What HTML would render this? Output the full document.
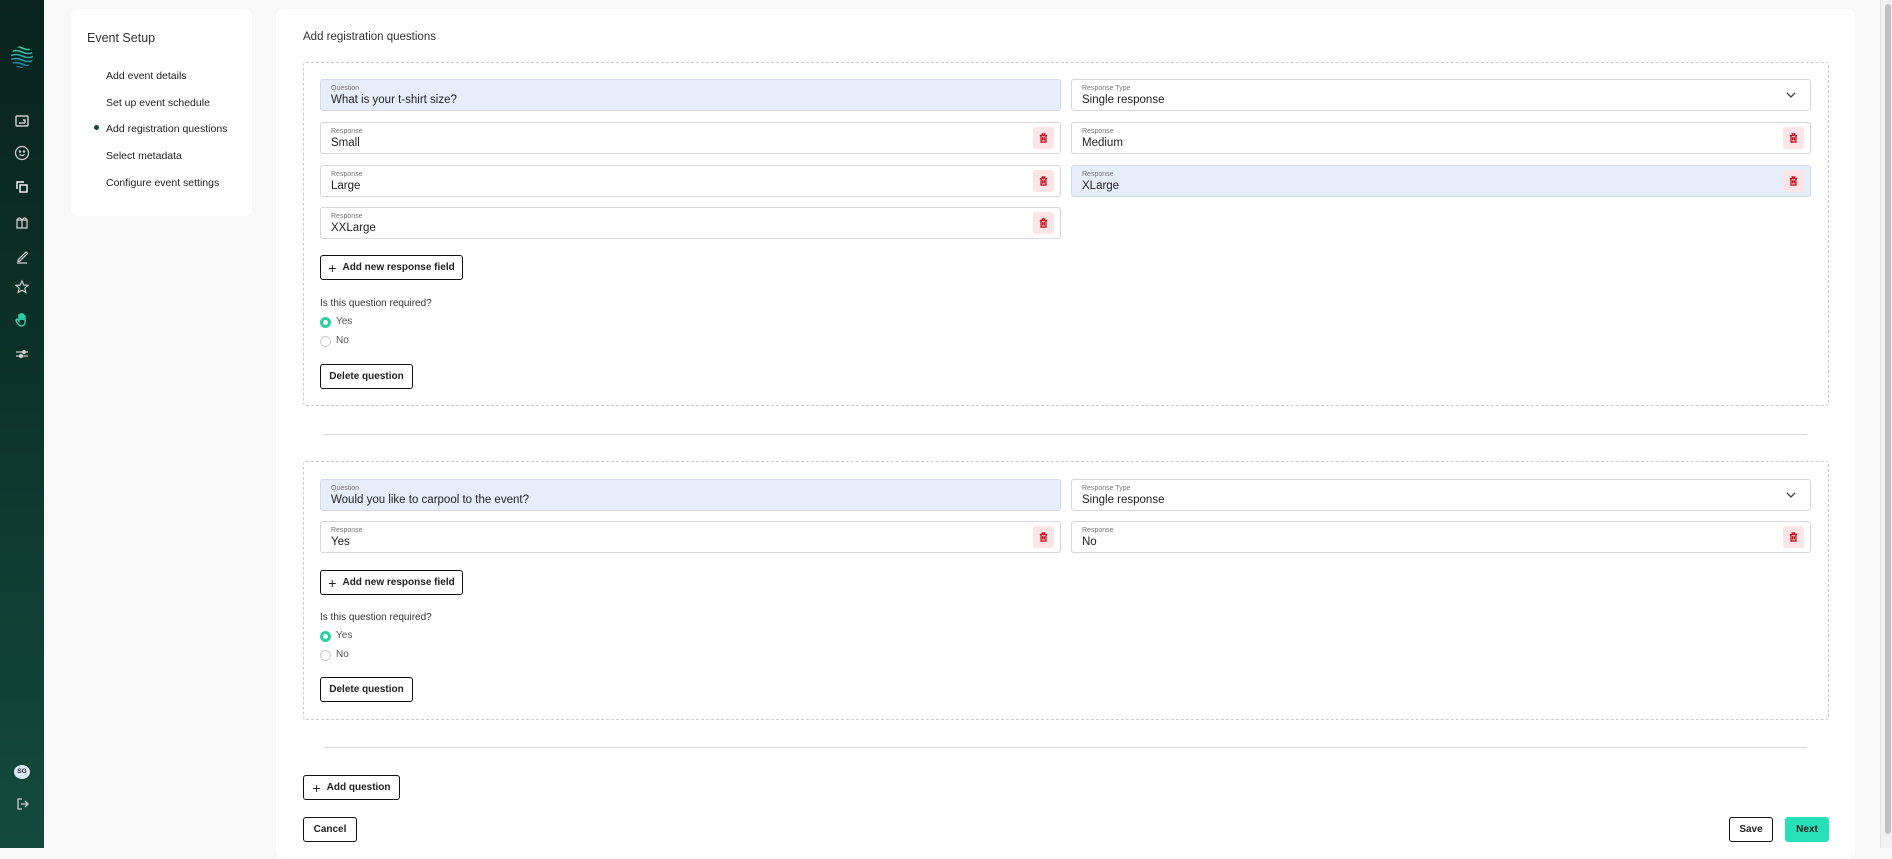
<!DOCTYPE html>
<html><head><meta charset="utf-8"><style>
*{box-sizing:border-box;margin:0;padding:0}
body{width:1892px;height:848px;background:#f8f8f8;font-family:"Liberation Sans",sans-serif;color:#222;position:relative;overflow:hidden}
.abs{position:absolute}
.side{left:0;top:0;width:44px;height:848px;background:linear-gradient(180deg,#08231d 0%,#0c3128 40%,#134a3e 100%)}
.ico{position:absolute;left:12px;width:20px;height:20px}
.card{background:#fff;border-radius:8px}
.nav{position:absolute;left:106px;font-size:10.5px;color:#222}
.box{border:1px dashed #ccc;border-radius:3px}
.inp{position:absolute;height:32px;border:1px solid #d8d8d8;border-radius:3px;background:#fff}
.inp.hl{background:#e7eefb;border-color:#d4dbe6}
.inp .l{position:absolute;left:10px;top:5px;font-size:7px;color:#777}
.inp .v{position:absolute;left:10px;top:14px;font-size:11.5px;color:#222}
.tr{position:absolute;right:6px;top:4px;width:21px;height:22px;background:#fde4e6;border-radius:3px}
.tr svg{position:absolute;left:6px;top:6px}
.btn{position:absolute;height:25px;border:1.3px solid #111;border-radius:3px;background:#fff;font-size:10px;font-weight:bold;color:#222;display:flex;align-items:center;justify-content:center}
.rad{position:absolute;width:11px;height:11px;border-radius:50%}
.txt{position:absolute;font-size:10px;color:#333}
.hr{position:absolute;height:1px;background:#d8d8d8}
</style></head><body>
<div class="abs side">
<svg class="abs" style="left:10px;top:45px" width="24" height="24" viewBox="0 0 24 24"><defs><linearGradient id="g" x1="0" y1="0" x2="0" y2="1"><stop offset="0" stop-color="#3cd29a"/><stop offset="1" stop-color="#1a6fb0"/></linearGradient><clipPath id="c"><circle cx="12" cy="12" r="11"/></clipPath></defs><g clip-path="url(#c)" stroke="url(#g)" stroke-width="1.6" fill="none"><path d="M0 3q6-3 12 0t12 0M0 7q6-3 12 0t12 0M0 11q6-3 12 0t12 0M0 15q6-3 12 0t12 0M0 19q6-3 12 0t12 0M0 23q6-3 12 0t12 0"/></g></svg>
<svg class="ico" style="top:111px" viewBox="0 0 20 20" fill="none" stroke="#ccc" stroke-width="1.5"><rect x="4" y="5" width="12" height="10" rx="1"/><path d="M7 12h6M11 9h2v3" /></svg>
<svg class="ico" style="top:143px" viewBox="0 0 20 20" fill="none" stroke="#ccc" stroke-width="1.3"><circle cx="10" cy="10" r="6.5"/><path d="M7.5 11.5q2.5 2 5 0"/><circle cx="8" cy="8.5" r=".6" fill="#ccc"/><circle cx="12" cy="8.5" r=".6" fill="#ccc"/></svg>
<svg class="ico" style="top:177px" viewBox="0 0 20 20" fill="none" stroke="#fff" stroke-width="1.4"><path d="M5 12V5h7"/><rect x="8" y="8" width="7" height="7"/></svg>
<svg class="ico" style="top:212px" viewBox="0 0 20 20" fill="none" stroke="#ccc" stroke-width="1.3"><rect x="5" y="8" width="10" height="8"/><path d="M10 8v8M5 8q2-4 5 0q3-4 5 0"/></svg>
<svg class="ico" style="top:246px" viewBox="0 0 20 20" fill="none" stroke="#ccc" stroke-width="1.3"><path d="M6 14l8-8 1.5 1.5-8 8H6zM5 17h10"/></svg>
<svg class="ico" style="top:277px" viewBox="0 0 20 20" fill="none" stroke="#ccc" stroke-width="1.2"><path d="M10 4l1.8 4 4.2.4-3.2 2.8 1 4.2L10 13.2 6.2 15.4l1-4.2L4 8.4 8.2 8z"/></svg>
<svg class="ico" style="top:310px" viewBox="0 0 20 20" fill="none" stroke="#2fd2a4" stroke-width="1.4"><path d="M7 15q-3-3-3-5l1-1 2 2V5h1.5v5V4h1.5v6V4.5h1.5V10V6h1.5v6q0 4-4 4z"/></svg>
<svg class="ico" style="top:344px" viewBox="0 0 20 20" fill="none" stroke="#ccc" stroke-width="1.3"><path d="M4 8h12M4 12h12"/><circle cx="12" cy="8" r="1.5" fill="#ccc"/><circle cx="9" cy="12" r="1.5" fill="#ccc"/></svg>
<div class="abs" style="left:14px;top:765px;width:16px;height:14px;border-radius:50%;background:#dde8f2;font-size:6.5px;font-weight:bold;color:#223;text-align:center;line-height:14px">SG</div>
<svg class="ico" style="top:794px" viewBox="0 0 20 20" fill="none" stroke="#ccc" stroke-width="1.3"><path d="M10 5H6v10h4M9 10h7M13 7l3 3-3 3"/></svg>
</div>

<div class="abs card" style="left:71px;top:9px;width:181px;height:207px">
<div class="abs" style="left:16px;top:22px;font-size:12.5px;color:#333">Event Setup</div>
</div>
<div class="nav" style="top:70px">Add event details</div>
<div class="nav" style="top:97px">Set up event schedule</div>
<div class="abs" style="left:94px;top:125px;width:5px;height:5px;border-radius:50%;background:#0d4a3c"></div>
<div class="nav" style="top:123px">Add registration questions</div>
<div class="nav" style="top:150px">Select metadata</div>
<div class="nav" style="top:177px">Configure event settings</div>

<div class="abs card" style="left:276px;top:9px;width:1579px;height:850px"></div>
<div class="abs" style="left:303px;top:31px;font-size:11.5px;color:#333">Add registration questions</div>

<div class="abs box" style="left:303px;top:62px;width:1526px;height:344px"></div>
<div class="inp hl" style="left:320px;top:79px;width:741px"><span class="l">Question</span><span class="v">What is your t-shirt size?</span></div>
<div class="inp" style="left:1071px;top:79px;width:740px"><span class="l">Response Type</span><span class="v">Single response</span><svg class="abs" style="right:14px;top:12px" width="10" height="7" viewBox="0 0 10 7" fill="none" stroke="#444" stroke-width="1.3"><path d="M1 1l4 4 4-4"/></svg></div>
<div class="inp" style="left:320px;top:122px;width:741px"><span class="l">Response</span><span class="v">Small</span><div class="tr"><svg width="9" height="10" viewBox="0 0 11 12" fill="none" stroke="#c1121f" stroke-width="1.6"><path d="M1 3h9M4 3V1h3v2M2.5 3v8h6V3M4.5 5v4M6.5 5v4"/></svg></div></div>
<div class="inp" style="left:1071px;top:122px;width:740px"><span class="l">Response</span><span class="v">Medium</span><div class="tr"><svg width="9" height="10" viewBox="0 0 11 12" fill="none" stroke="#c1121f" stroke-width="1.6"><path d="M1 3h9M4 3V1h3v2M2.5 3v8h6V3M4.5 5v4M6.5 5v4"/></svg></div></div>
<div class="inp" style="left:320px;top:165px;width:741px"><span class="l">Response</span><span class="v">Large</span><div class="tr"><svg width="9" height="10" viewBox="0 0 11 12" fill="none" stroke="#c1121f" stroke-width="1.6"><path d="M1 3h9M4 3V1h3v2M2.5 3v8h6V3M4.5 5v4M6.5 5v4"/></svg></div></div>
<div class="inp hl" style="left:1071px;top:165px;width:740px"><span class="l">Response</span><span class="v">XLarge</span><div class="tr"><svg width="9" height="10" viewBox="0 0 11 12" fill="none" stroke="#c1121f" stroke-width="1.6"><path d="M1 3h9M4 3V1h3v2M2.5 3v8h6V3M4.5 5v4M6.5 5v4"/></svg></div></div>
<div class="inp" style="left:320px;top:207px;width:741px"><span class="l">Response</span><span class="v">XXLarge</span><div class="tr"><svg width="9" height="10" viewBox="0 0 11 12" fill="none" stroke="#c1121f" stroke-width="1.6"><path d="M1 3h9M4 3V1h3v2M2.5 3v8h6V3M4.5 5v4M6.5 5v4"/></svg></div></div>
<div class="btn" style="left:320px;top:255px;width:143px"><span style="font-weight:normal;font-size:14px;margin-right:6px">+</span>Add new response field</div>
<div class="txt" style="left:320px;top:298px">Is this question required?</div>
<div class="rad" style="left:320px;top:317px;border:3px solid #2ccf9f"></div><div class="txt" style="left:336px;top:316px;color:#555">Yes</div>
<div class="rad" style="left:320px;top:336px;border:1px solid #ccc"></div><div class="txt" style="left:336px;top:335px;color:#555">No</div>
<div class="btn" style="left:320px;top:364px;width:93px">Delete question</div>
<div class="hr" style="left:324px;top:434px;width:1483px"></div>

<div class="abs box" style="left:303px;top:461px;width:1526px;height:259px"></div>
<div class="inp hl" style="left:320px;top:479px;width:741px"><span class="l">Question</span><span class="v">Would you like to carpool to the event?</span></div>
<div class="inp" style="left:1071px;top:479px;width:740px"><span class="l">Response Type</span><span class="v">Single response</span><svg class="abs" style="right:14px;top:12px" width="10" height="7" viewBox="0 0 10 7" fill="none" stroke="#444" stroke-width="1.3"><path d="M1 1l4 4 4-4"/></svg></div>
<div class="inp" style="left:320px;top:521px;width:741px"><span class="l">Response</span><span class="v">Yes</span><div class="tr"><svg width="9" height="10" viewBox="0 0 11 12" fill="none" stroke="#c1121f" stroke-width="1.6"><path d="M1 3h9M4 3V1h3v2M2.5 3v8h6V3M4.5 5v4M6.5 5v4"/></svg></div></div>
<div class="inp" style="left:1071px;top:521px;width:740px"><span class="l">Response</span><span class="v">No</span><div class="tr"><svg width="9" height="10" viewBox="0 0 11 12" fill="none" stroke="#c1121f" stroke-width="1.6"><path d="M1 3h9M4 3V1h3v2M2.5 3v8h6V3M4.5 5v4M6.5 5v4"/></svg></div></div>
<div class="btn" style="left:320px;top:570px;width:143px"><span style="font-weight:normal;font-size:14px;margin-right:6px">+</span>Add new response field</div>
<div class="txt" style="left:320px;top:612px">Is this question required?</div>
<div class="rad" style="left:320px;top:631px;border:3px solid #2ccf9f"></div><div class="txt" style="left:336px;top:630px;color:#555">Yes</div>
<div class="rad" style="left:320px;top:650px;border:1px solid #ccc"></div><div class="txt" style="left:336px;top:649px;color:#555">No</div>
<div class="btn" style="left:320px;top:677px;width:93px">Delete question</div>
<div class="hr" style="left:324px;top:747px;width:1483px"></div>

<div class="btn" style="left:303px;top:775px;width:97px"><span style="font-weight:normal;font-size:14px;margin-right:6px">+</span>Add question</div>
<div class="btn" style="left:303px;top:817px;width:54px">Cancel</div>
<div class="btn" style="left:1729px;top:817px;width:44px">Save</div>
<div class="btn" style="left:1785px;top:817px;width:44px;background:#25e0b9;border-color:#25e0b9">Next</div>

<div class="abs" style="left:1880px;top:0;width:12px;height:848px;background:#f1f1f1;border-left:1px solid #e4e4e4"></div>
<div class="abs" style="left:1885px;top:4px;width:6px;height:830px;background:#c1c1c1;border-radius:3px"></div>
</body></html>
